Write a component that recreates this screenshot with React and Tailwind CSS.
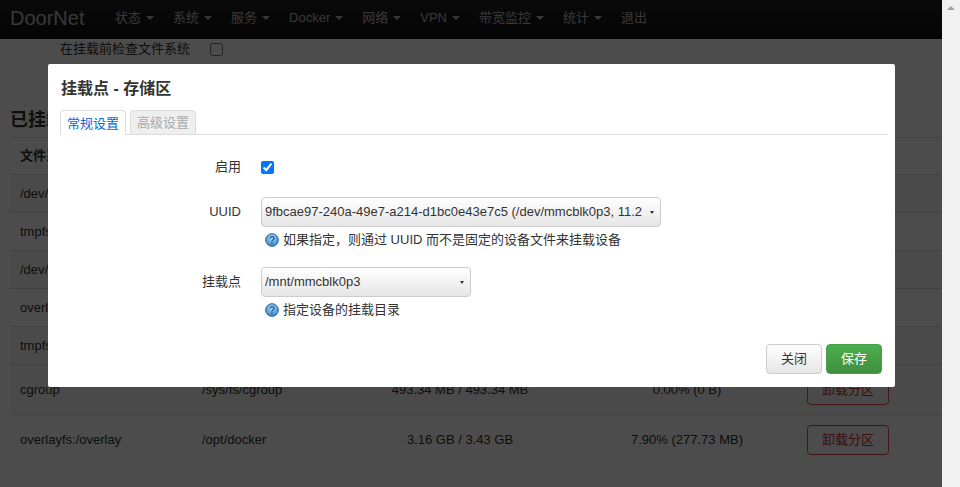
import React from 'react';

const navItems = [
  { label: '状态', caret: true },
  { label: '系统', caret: true },
  { label: '服务', caret: true },
  { label: 'Docker', caret: true },
  { label: '网络', caret: true },
  { label: 'VPN', caret: true },
  { label: '带宽监控', caret: true },
  { label: '统计', caret: true },
  { label: '退出', caret: false },
];

const smallRows = [
  { name: '/dev/mmcblk0p2', dark: true },
  { name: 'tmpfs', dark: false },
  { name: '/dev/mmcblk0p1', dark: true },
  { name: 'overlay', dark: false },
  { name: 'tmpfs', dark: true },
];

function Caret({ className }) {
  return <span className={`ml-[5px] inline-block h-0 w-0 border-x-4 border-t-4 border-x-transparent align-middle ${className}`} />;
}

function HelpIcon() {
  return (
    <svg width="14" height="14" viewBox="0 0 14 14" className="shrink-0">
      <defs>
        <radialGradient id="helpFill" cx="50%" cy="35%" r="65%">
          <stop offset="0%" stopColor="#bfe0f8" />
          <stop offset="100%" stopColor="#2f7fc4" />
        </radialGradient>
      </defs>
      <circle cx="7" cy="7" r="6.3" fill="url(#helpFill)" stroke="#1f64a0" strokeWidth="1" />
      <text x="7" y="10.5" textAnchor="middle" fontSize="10" fontWeight="700" fill="#1f5f9c" fontFamily="Liberation Sans">?</text>
    </svg>
  );
}

function SelectBox({ width, children }) {
  return (
    <div className={`flex h-[30px] items-center rounded border border-[#ccc] bg-gradient-to-b from-white to-[#e6e6e6] pl-[3px] pr-[6px] ${width}`}>
      <span className="min-w-0 flex-1 overflow-hidden whitespace-nowrap text-[#333]">{children}</span>
      <Caret className="ml-[5px] border-x-[2.5px] border-t-[3px] border-t-[#333]" />
    </div>
  );
}

function UnmountButton() {
  return (
    <button className="h-[30px] w-[82px] rounded border border-[#d9534f] text-[#c9302c]">卸载分区</button>
  );
}

export default function App() {
  return (
    <div className="relative flex h-[487px] w-[960px] overflow-hidden bg-white font-['Liberation_Sans','Noto_Sans_CJK_SC',sans-serif] text-[13px] text-[#333]">
      <div className="relative h-full w-[942px] overflow-hidden">
        <nav className="flex h-[39px] items-center bg-gradient-to-b from-[#222] to-[#111] pb-[3px] pl-[10px] text-[#bbb]">
          <span className="mr-[30px] w-[75px] text-[20px]">DoorNet</span>
          {navItems.map((item) => (
            <span key={item.label} className="mr-[19px] flex items-center whitespace-nowrap">
              {item.label}
              {item.caret && <Caret className="border-t-[#bbb]" />}
            </span>
          ))}
        </nav>

        <div className="ml-[60px] mt-[4px] flex h-[12px] items-center gap-[20px]">
          <span className="w-[130px] whitespace-nowrap">在挂载前检查文件系统</span>
          <input type="checkbox" readOnly className="m-0" />
        </div>

        <div className="ml-[10px] mt-[52px]">
          <h3 className="h-[30px] overflow-hidden whitespace-nowrap text-[18px] font-bold leading-[26px]">已挂载</h3>
          <div className="flex h-[38px] items-center border-b border-t border-[#ddd] pl-[10px] font-bold">文件系统</div>
          {smallRows.map((row, i) => (
            <div key={i} className={`flex h-[38px] items-center border-b border-[#ddd] pl-[10px] ${row.dark ? 'bg-[#f9f9f9]' : ''}`}>
              {row.name}
            </div>
          ))}
          <div className="flex h-[50px] items-center border-b border-[#ddd] bg-[#f9f9f9] pl-[10px]">
            <span className="w-[182px]">cgroup</span>
            <span className="w-[148px]">/sys/fs/cgroup</span>
            <span className="w-[220px] text-center">493.34 MB / 493.34 MB</span>
            <span className="ml-[47px] w-[140px] text-center">0.00% (0 B)</span>
            <span className="ml-[50px]"><UnmountButton /></span>
          </div>
          <div className="flex h-[50px] items-center pl-[10px]">
            <span className="w-[182px]">overlayfs:/overlay</span>
            <span className="w-[148px]">/opt/docker</span>
            <span className="w-[220px] text-center">3.16 GB / 3.43 GB</span>
            <span className="ml-[47px] w-[140px] text-center">7.90% (277.73 MB)</span>
            <span className="ml-[50px]"><UnmountButton /></span>
          </div>
        </div>

        {/* modal backdrop */}
        <div className="absolute inset-0 bg-black/70" />

        <div className="absolute left-[48px] top-[64px] h-[323px] w-[847px] rounded-[2px] bg-white px-[12px] pt-[14px]">
          <h4 className="h-[32px] pl-[1px] text-[16px] font-bold leading-[22px]">挂载点 - 存储区</h4>
          <div className="mr-[-4px] flex h-[25px] gap-[4px] border-b border-[#ddd]">
            <span className="h-[25px] rounded-t border border-b-0 border-[#ddd] bg-white px-[6px] leading-[25px] text-[#0069d9]">常规设置</span>
            <span className="h-[24px] rounded-t border border-b-0 border-[#ddd] bg-[#eee] px-[6px] leading-[24px] text-[#aaa]">高级设置</span>
          </div>

          <div className="mt-[25px] flex h-[14px] items-center gap-[20px]">
            <label className="w-[181px] text-right">启用</label>
            <input type="checkbox" defaultChecked className="m-0" />
          </div>

          <div className="mt-[23px] flex items-start gap-[20px]">
            <label className="w-[181px] text-right leading-[30px]">UUID</label>
            <div>
              <SelectBox width="w-[400px]">9fbcae97-240a-49e7-a214-d1bc0e43e7c5 (/dev/mmcblk0p3, 11.2</SelectBox>
              <div className="mt-[6px] flex h-[14px] items-center gap-[4px] pl-[4px]">
                <HelpIcon />
                <span>如果指定，则通过 UUID 而不是固定的设备文件来挂载设备</span>
              </div>
            </div>
          </div>

          <div className="mt-[20px] flex items-start gap-[20px]">
            <label className="w-[181px] text-right leading-[30px]">挂载点</label>
            <div>
              <SelectBox width="w-[210px]">/mnt/mmcblk0p3</SelectBox>
              <div className="mt-[6px] flex h-[14px] items-center gap-[4px] pl-[4px]">
                <HelpIcon />
                <span>指定设备的挂载目录</span>
              </div>
            </div>
          </div>

          <div className="mt-[27px] flex justify-end gap-[4px] pr-[1px]">
            <button className="h-[30px] w-[56px] rounded border border-[#ccc] bg-gradient-to-b from-white to-[#e6e6e6] text-[#333]">关闭</button>
            <button className="h-[30px] w-[56px] rounded border border-[#4a9f4a] bg-gradient-to-b from-[#4cae4c] to-[#3f8f3f] text-white">保存</button>
          </div>
        </div>
      </div>

      {/* window scrollbar */}
      <div className="flex h-full w-[18px] justify-center bg-[#f1f1f1] pt-[6px]">
        <span className="h-0 w-0 border-x-[4px] border-b-[4px] border-x-transparent border-b-[#a3a3a3]" />
      </div>
    </div>
  );
}
